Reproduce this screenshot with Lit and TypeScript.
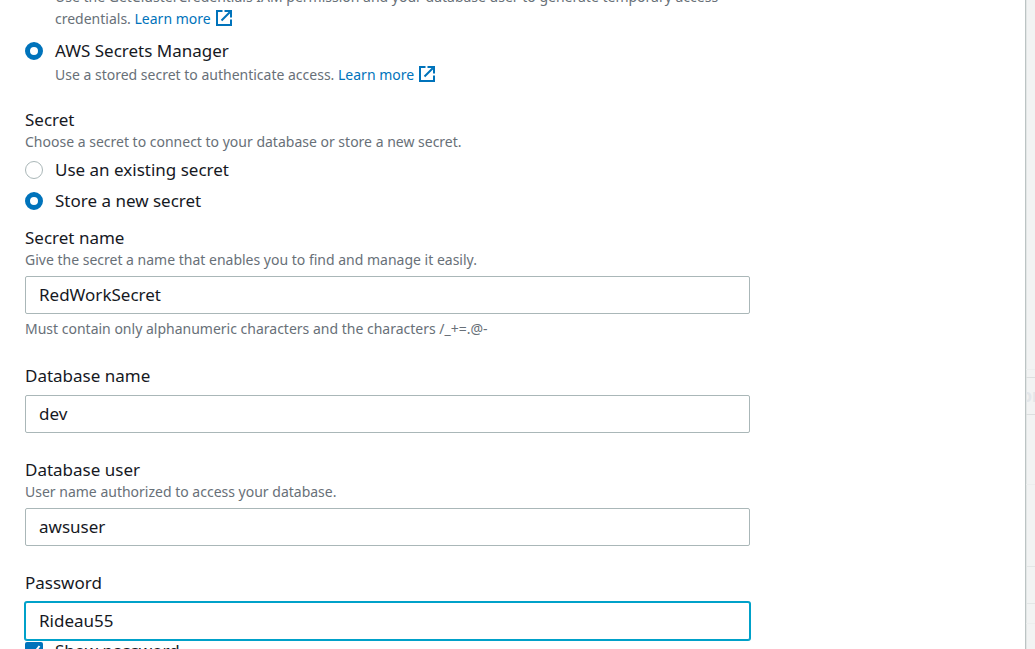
import { LitElement, html, css, svg } from "lit";
import { customElement, property } from "lit/decorators.js";

@customElement("external-link")
export class ExternalLink extends LitElement {
  static styles = css`
    a { color: #0073bb; text-decoration: none; white-space: nowrap; }
    svg { width: 16px; height: 16px; margin-left: 5px; vertical-align: -2px; fill: none; stroke: currentColor; stroke-width: 2; }
    .head { fill: currentColor; stroke: none; }
  `;
  render() {
    return html`<a href="#"><slot></slot>${svg`<svg viewBox="0 0 16 16" aria-hidden="true">
      <path d="M6.500 1H1v14h14V9.500M13.500 2.500 5.500 10.500" /><path class="head" d="M8.500 0H16v7.500h-2V3.500L12.500 2H8.500z" /></svg>`}</a>`;
  }
}

@customElement("backdrop-strip")
export class BackdropStrip extends LitElement {
  static styles = css`
    :host { display: block; overflow: hidden; background: #f2f3f3; border-left: 1px solid #bcc4c4; box-shadow: inset 1px 0 0 #e3e6e6; }
    .header { height: 369px; border-bottom: 1px solid #eceeee; }
    .tool { display: flex; justify-content: center; margin-top: 7px; height: 36px; border: solid #dcdfdf; border-width: 1px 0;
      font-size: 17px; font-weight: 700; line-height: 36px; color: #e3e6e9; white-space: nowrap; }
    .row { box-sizing: border-box; border-bottom: 1px solid #e3e6e6; }
    .gap { height: 70px; border-color: #eceeee; }
    .tall { height: 82px; }
    .short { height: 37px; }
    .last { height: 20px; border-color: #eceeee; }
  `;
  render() {
    return html`<div class="header"></div><div class="tool">or</div>
      <div class="row gap"></div><div class="row tall"></div><div class="row short"></div><div class="row last"></div>`;
  }
}

@customElement("app-root")
export class AppRoot extends LitElement {
  @property() secretName = "RedWorkSecret";

  static styles = css`
    :host { display: grid; grid-template-columns: minmax(0, 1fr) 10px; height: 100vh; overflow: hidden;
      background: #fff; color: #16191f; font: 17px/22px "Noto Sans", "Open Sans", sans-serif; }
    main { padding: 0 25px; min-width: 0; overflow: hidden; }
    form { max-width: 725px; margin-top: -14px; }
    p { margin: 0; color: #687078; font-size: 14px; line-height: 22px; }
    label, legend { display: block; padding: 0; }
    fieldset { border: 0; padding: 0; margin: 0; min-width: 0; }
    .choice { display: grid; grid-template-columns: 18px minmax(0, 1fr); column-gap: 12px; align-items: center; margin-top: 9px; }
    .choice p { grid-column: 2; }
    .choice .note { margin-top: 2px; }
    .first { margin: 0 0 10px; }
    .options { margin-top: 23px; }
    .options .choice:first-of-type { margin-top: 6px; }
    .field { margin-top: 26px; }
    .field.near { margin-top: 15px; }
    .field label + input { margin-top: 8px; }
    .field p + input { margin-top: 5px; }
    .field .hint { margin-top: 4px; line-height: 21px; }
    input[type="text"] { display: block; box-sizing: border-box; width: 100%; height: 38px; padding: 0 13px 2px;
      border: 1px solid #aab7b8; border-radius: 2px; background: #fff; color: inherit; font: inherit; outline: 0; }
    input.active { border-color: #00a1c9; box-shadow: 0 0 0 1px #00a1c9; }
    input[type="radio"] { appearance: none; width: 18px; height: 18px; margin: 0; border: 1px solid #aab7b8; border-radius: 50%; background: #fff; }
    input[type="radio"]:checked { border: 5px solid #0073bb; }
    input[type="checkbox"] { appearance: none; width: 18px; height: 18px; margin: 0; border-radius: 2px; background: #0073bb; }
    .tick { position: relative; display: flex; }
    .tick svg { position: absolute; inset: 0; fill: none; stroke: #fff; stroke-width: 2; pointer-events: none; }
    .show { margin-top: 0; }
  `;

  render() {
    return html`
      <main>
        <form>
          <fieldset aria-label="Authentication">
            <div class="choice first">
              <p>Use the GetClusterCredentials IAM permission and your database user to generate temporary access credentials.
                <external-link>Learn more</external-link></p>
            </div>
            <div class="choice">
              <input type="radio" name="auth" id="manager" checked />
              <label for="manager">AWS Secrets Manager</label>
              <p class="note">Use a stored secret to authenticate access. <external-link>Learn more</external-link></p>
            </div>
          </fieldset>
          <fieldset class="options">
            <legend>Secret</legend>
            <p>Choose a secret to connect to your database or store a new secret.</p>
            <div class="choice">
              <input type="radio" name="secret" id="existing" />
              <label for="existing">Use an existing secret</label>
            </div>
            <div class="choice">
              <input type="radio" name="secret" id="store" checked />
              <label for="store">Store a new secret</label>
            </div>
          </fieldset>
          <div class="field near">
            <label for="name">Secret name</label>
            <p>Give the secret a name that enables you to find and manage it easily.</p>
            <input type="text" id="name" .value=${this.secretName} />
            <p class="hint">Must contain only alphanumeric characters and the characters /_+=.@-</p>
          </div>
          <div class="field">
            <label for="database">Database name</label>
            <input type="text" id="database" value="dev" />
          </div>
          <div class="field">
            <label for="user">Database user</label>
            <p>User name authorized to access your database.</p>
            <input type="text" id="user" value="awsuser" />
          </div>
          <div class="field">
            <label for="password">Password</label>
            <input class="active" type="text" id="password" value="Rideau55" />
          </div>
          <div class="choice show">
            <span class="tick"><input type="checkbox" id="show" checked />
              <svg viewBox="0 0 18 18" aria-hidden="true"><path d="M4 9.500 7.500 13 14.500 4" /></svg></span>
            <label for="show">Show password</label>
          </div>
        </form>
      </main>
      <backdrop-strip></backdrop-strip>
    `;
  }
}
